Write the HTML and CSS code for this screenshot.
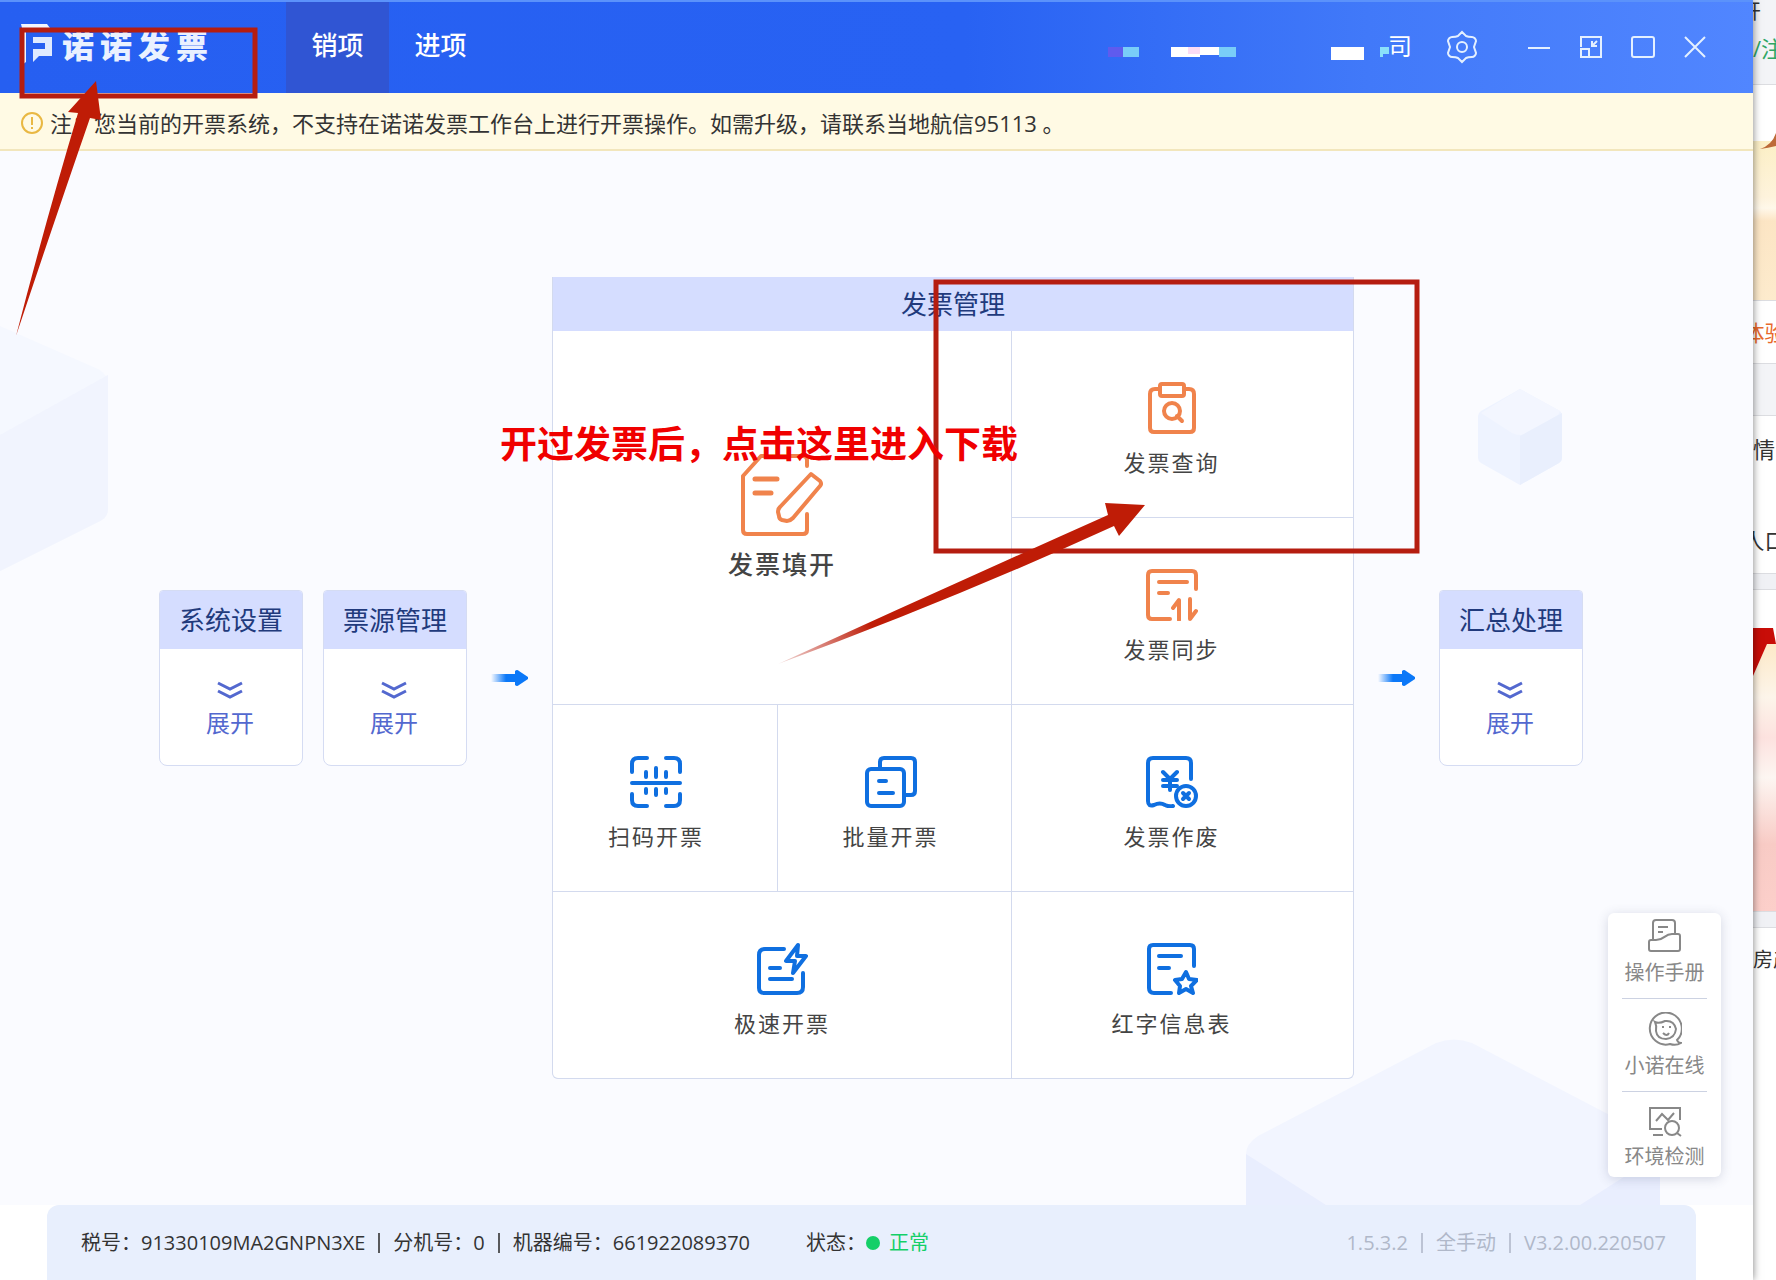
FILE: index.html
```html
<!DOCTYPE html>
<html lang="zh-CN">
<head>
<meta charset="utf-8">
<title>诺诺发票</title>
<link rel="stylesheet" href="styles.css">
</head>
<body>
<div class="app">
  <header class="topbar">
    <div class="brand">
      <svg class="brand-mark" width="34" height="46" viewBox="0 0 34 46" aria-hidden="true"><path d="M1 1h26l3 4H6v34l-4 3V5z" fill="#f2f6ff"/><path d="M13 14h19v19H19l-6 6V26h12v-6H13z" fill="#dfeaff"/></svg>
      <span class="brand-name">诺诺发票</span>
    </div>
    <nav class="tabs">
      <button class="tab tab-active" type="button">销项</button>
      <button class="tab" type="button">进项</button>
    </nav>
    <div class="account">
      <svg width="304" height="16" viewBox="0 0 304 16" aria-hidden="true"><path d="M0 1h15v10H0z" fill="#5f5bee"/><path d="M15 1h16v10H15z" fill="#79cdf8"/><path d="M63 1h48v8H92v2H63z" fill="#fff"/><path d="M80 1h12v7H80z" fill="#fbdcf5"/><path d="M111 1h17v10h-17z" fill="#79cdf8"/><path d="M223 1h33v13h-33z" fill="#fff"/><path d="M272 1h9v7h-6v3h-3z" fill="#8be0fa"/></svg>
      <span class="account-tail">司</span>
    </div>
    <div class="controls">
      <button class="control" type="button" aria-label="设置"><svg width="34" height="34" viewBox="0 0 34 34"><path d="M17 2l4 4c2 1 3 1 6 1 2 0 4 2 4 4l-2 6 2 6c0 2-2 4-4 4-3 0-4 0-6 1l-4 4-4-4c-2-1-3-1-6-1-2 0-4-2-4-4l2-6-2-6c0-2 2-4 4-4 3 0 4 0 6-1z"/><circle cx="17" cy="17" r="5"/></svg></button>
      <button class="control control-min" type="button" aria-label="最小化"><svg width="24" height="24" viewBox="0 0 24 24"><path d="M1 13h22"/></svg></button>
      <button class="control" type="button" aria-label="小窗口"><svg width="24" height="24" viewBox="0 0 24 24"><path d="M2 12V2h20v20H11M2 14h8v8H2zM18 6l-5 5M13 6v5h5"/></svg></button>
      <button class="control" type="button" aria-label="最大化"><svg width="24" height="24" viewBox="0 0 24 24"><rect x="1" y="2" width="22" height="20" rx="2"/></svg></button>
      <button class="control" type="button" aria-label="关闭"><svg width="24" height="24" viewBox="0 0 24 24"><path d="M2 2l20 20M22 2L2 22"/></svg></button>
    </div>
  </header>

  <div class="notice">
    <svg width="24" height="24" viewBox="0 0 24 24" aria-hidden="true"><circle cx="12" cy="12" r="10" fill="none" stroke="#e9b843" stroke-width="2"/><path d="M12 6v8M12 16v2" stroke="#e9b843" stroke-width="2"/></svg>
    <p>注：您当前的开票系统，不支持在诺诺发票工作台上进行开票操作。如需升级，请联系当地航信95113 。</p>
  </div>

  <main class="workspace">
    <svg class="decor decor-left" width="110" height="250" viewBox="0 0 110 250" aria-hidden="true"><path d="M0 3l98 43q10 6 10 14v126q0 8-8 12L0 248z" fill="#f5f8ff"/><path d="M0 112l108-60v134q0 8-8 12L0 248z" fill="#f1f4fe"/></svg>
    <svg class="decor decor-cube" width="86" height="98" viewBox="0 0 86 98" aria-hidden="true"><path d="M43 1l40 22q2 2 2 5v42q0 3-3 5L43 97 4 75q-3-2-3-5V28q0-3 3-5z" fill="#eef3ff"/><path d="M43 1l40 22-2 4-30 18q-8 4-16 0L4 25z" fill="#f3f6ff"/><path d="M43 48l42-23v45q0 3-3 5L43 97z" fill="#e9effd"/></svg>
    <svg class="decor decor-base" width="416" height="166" viewBox="0 0 416 166" aria-hidden="true"><path d="M190 4q18-7 36 0l174 91q14 7 14 20v51H0v-51q0-10 12-18z" fill="#f2f5ff"/><path d="M0 115l80 51H0zM414 115l-80 51h80z" fill="#e9eefe"/></svg>

    <div class="flow">
      <div class="card-group">
        <section class="card"><h2>系统设置</h2><button type="button"><svg width="26" height="18" viewBox="0 0 26 18"><path d="M1 2l12 6 12-6M1 10l12 6 12-6"/></svg>展开</button></section>
        <section class="card"><h2>票源管理</h2><button type="button"><svg width="26" height="18" viewBox="0 0 26 18"><path d="M1 2l12 6 12-6M1 10l12 6 12-6"/></svg>展开</button></section>
      </div>
      <svg class="arrow" width="37" height="18" viewBox="0 0 37 18" aria-hidden="true"><defs><linearGradient id="fade"><stop offset="0" stop-color="#0b78f8" stop-opacity="0"/><stop offset=".6" stop-color="#0b78f8"/></linearGradient></defs><path d="M0 5h25v8H0z" fill="url(#fade)"/><path d="M24 2q2-2 4 0l9 6q1 1 0 2l-9 6q-2 2-4 0z" fill="#0b78f8"/></svg>

      <section class="panel">
        <h2>发票管理</h2>
        <div class="grid">
          <button class="cell cell-main" type="button">
            <svg width="82" height="82" viewBox="0 0 82 82"><path d="M66 12V6q0-4-4-4H20L2 22v54q0 4 4 4h56q4 0 4-4V60"/><path d="M14 25h22M14 39h16" stroke-width="5"/><path d="M70 20l9 7q2 3 0 5L52 64q-3 3-6 3l-5-1q-3-1-3-4l-1-4q0-3 2-5z"/></svg>
            <span>发票填开</span>
          </button>
          <button class="cell cell-right cell-orange" type="button">
            <svg width="52" height="52" viewBox="0 0 52 52"><path d="M14 7h-5q-5 0-5 5v34q0 4 4 4h36q4 0 4-4V12q0-5-5-5h-5"/><rect x="14" y="2" width="24" height="12" rx="2"/><circle cx="26" cy="29" r="8"/><path d="M31 34l5 5"/></svg>
            <span>发票查询</span>
          </button>
          <button class="cell cell-right cell-orange" type="button">
            <svg width="52" height="52" viewBox="0 0 52 52"><path d="M50 20V6q0-4-4-4H6Q2 2 2 6v40q0 4 4 4h18M13 13h28M13 24h9M27 39l6-8v20M44 30v20l6-8"/></svg>
            <span>发票同步</span>
          </button>
          <button class="cell cell-scan" type="button">
            <svg width="52" height="52" viewBox="0 0 52 52"><path d="M2 16V8q0-6 6-6h9M36 2h8q6 0 6 6v8M2 38v6q0 6 6 6h9M36 50h8q6 0 6-6v-6M2 27h48M16 16v5M26 12v9M36 16v5M16 33v4M26 33v6M36 33v4"/></svg>
            <span>扫码开票</span>
          </button>
          <button class="cell cell-batch" type="button">
            <svg width="52" height="52" viewBox="0 0 52 52"><path d="M15 13V6q0-4 4-4h27q4 0 4 4v29q0 4-4 4h-6"/><rect x="2" y="13" width="37" height="37" rx="4"/><path d="M14 25h7M14 37h14"/></svg>
            <span>批量开票</span>
          </button>
          <button class="cell cell-right" type="button">
            <svg width="52" height="52" viewBox="0 0 52 52"><path d="M45 23V7q0-5-5-5H7Q2 2 2 7v38q0 6 6 4 6-3 11 0 4 2 8 1M17 16l7 7 7-7M24 23v11M17 24h14M17 30h14"/><circle cx="40" cy="40" r="10"/><path d="M37 37l6 6M43 37l-6 6"/></svg>
            <span>发票作废</span>
          </button>
          <button class="cell cell-fast" type="button">
            <svg width="52" height="52" viewBox="0 0 52 52"><path d="M28 6H9Q3 6 3 12v33q0 5 5 5h33q6 0 6-6V30M14 25h10M14 36h22M42 2L30 18h9l-2 12 13-17h-9z"/></svg>
            <span>极速开票</span>
          </button>
          <button class="cell cell-right" type="button">
            <svg width="52" height="52" viewBox="0 0 52 52"><path d="M48 23V6q0-4-4-4H7Q3 2 3 6v39q0 5 5 5h17M13 13h22M13 25h10M40 29l3 7 8 1-6 6 2 7-7-4-7 4 1-7-5-6 7-1z"/></svg>
            <span>红字信息表</span>
          </button>
        </div>
      </section>

      <svg class="arrow" width="37" height="18" viewBox="0 0 37 18" aria-hidden="true"><path d="M0 5h25v8H0z" fill="url(#fade)"/><path d="M24 2q2-2 4 0l9 6q1 1 0 2l-9 6q-2 2-4 0z" fill="#0b78f8"/></svg>
      <section class="card"><h2>汇总处理</h2><button type="button"><svg width="26" height="18" viewBox="0 0 26 18"><path d="M1 2l12 6 12-6M1 10l12 6 12-6"/></svg>展开</button></section>
    </div>
  </main>

  <footer class="footer">
    <div class="status">
      <div class="status-left">
        <span>税号：91330109MA2GNPN3XE</span><i></i><span>分机号：0</span><i></i><span>机器编号：661922089370</span>
        <span class="state">状态：<b></b><em>正常</em></span>
      </div>
      <div class="status-right"><span>1.5.3.2</span><i></i><span>全手动</span><i></i><span>V3.2.00.220507</span></div>
    </div>
  </footer>

  <aside class="tools">
    <button type="button"><svg width="34" height="34" viewBox="0 0 34 34"><path d="M5 20V4q0-3 3-3h16q3 0 3 3v11M10 8h10M10 13h5M3 21h5c9 0 8-6 16-6h6q2 0 2 2v13q0 2-2 2H3q-2 0-2-2v-7q0-2 2-2z"/></svg><span>操作手册</span></button>
    <button type="button"><svg width="34" height="34" viewBox="0 0 34 34"><path d="M29 28a16 16 0 1 0-7 4q6 2 11-1-3 0-4-3z"/><path d="M7 10q4 2 10-1 9-1 11 8-1 9-10 10Q9 27 8 19 9 14 7 10z"/><path d="M15 14v2M22 14v2M15 21q4 4 6 0"/></svg><span>小诺在线</span></button>
    <button type="button"><svg width="34" height="34" viewBox="0 0 34 34"><path d="M14 24H2V3h30v12M5 30h10M8 16l6-7 6 6 6-7M29 28l4 3"/><circle cx="24" cy="23" r="7"/></svg><span>环境检测</span></button>
  </aside>

  <div class="marks">
    <svg width="1440" height="680" viewBox="0 0 1440 680" aria-hidden="true">
      <defs><linearGradient id="tail" gradientUnits="userSpaceOnUse" x1="778" y1="664" x2="870" y2="622"><stop offset="0" stop-color="#b51d10" stop-opacity=".15"/><stop offset="1" stop-color="#bf1c06"/></linearGradient></defs>
      <g fill="none" stroke="#b51d10" stroke-width="5"><rect x="22" y="30" width="233" height="66"/><rect x="936" y="282" width="481" height="269"/></g>
      <path d="M96 81L68 112l10 1Q46 220 16 336q38-114 74-218l11 2z" fill="#bf1c06"/>
      <path d="M1145 505l-40-2 3 12Q940 590 778 664q174-64 336-138l5 10z" fill="url(#tail)"/>
    </svg>
    <p>开过发票后，点击这里进入下载</p>
  </div>
</div>

<div class="behind">
  <div class="strip strip-head"><span class="strip-cut">开</span><span class="strip-green">/注</span></div>
  <div class="strip strip-banner"><svg width="23" height="216" viewBox="0 0 23 216" aria-hidden="true"><defs><linearGradient id="cream" x2="0" y2="1"><stop offset="0" stop-color="#fcefc5"/><stop offset=".35" stop-color="#fef3dc"/><stop offset=".42" stop-color="#fff8ea"/><stop offset=".5" stop-color="#fce5c4"/><stop offset="1" stop-color="#fdebcd"/></linearGradient></defs><path d="M0 56h23v160H0z" fill="url(#cream)"/><path d="M7 64q12-4 16-16v13q-8 2-16 3z" fill="#bd6a38"/></svg></div>
  <div class="strip strip-trial">体验</div>
  <div class="strip strip-gap"></div>
  <div class="strip strip-links"><span>情</span><span class="strip-wide">人口</span></div>
  <div class="strip strip-line"></div>
  <div class="strip strip-art"><svg width="23" height="321" viewBox="0 0 23 321" aria-hidden="true"><defs><linearGradient id="peach" x2="0" y2="1"><stop offset="0" stop-color="#fde9c8"/><stop offset=".2" stop-color="#fdf5ea"/><stop offset=".35" stop-color="#fde2df"/><stop offset=".5" stop-color="#fdf6f2"/><stop offset=".75" stop-color="#f8cbc5"/><stop offset="1" stop-color="#fccfca"/></linearGradient></defs><path d="M0 86L14 54h9v267H0z" fill="url(#peach)"/><path d="M0 38h20l3 16h-9L0 86z" fill="#c80d08"/></svg></div>
  <div class="strip strip-line"></div>
  <div class="strip strip-rest">房产</div>
</div>
</body>
</html>
```
FILE: styles.css
```css
* { box-sizing: border-box; }

body {
  margin: 0;
  min-height: 100vh;
  display: flex;
  overflow-x: hidden;
  background: #fff;
  color: #333;
  font: 22px/24px "Open Sans", "Noto Sans CJK SC", sans-serif;
}

h2, p { margin: 0; font-weight: 400; }

button {
  margin: 0;
  padding: 0;
  border: 0;
  background: none;
  color: inherit;
  font: inherit;
  cursor: pointer;
}

svg { display: block; flex: none; }

.app {
  position: relative;
  z-index: 1;
  flex: 1;
  min-width: 0;
  display: flex;
  flex-direction: column;
  background: #fafbff;
  box-shadow: 0 0 8px rgba(0, 0, 0, .5);
}

/* top bar */
.topbar {
  display: flex;
  align-items: stretch;
  height: 93px;
  border-top: 2px solid #5b92fb;
  background: linear-gradient(90deg, #265ff1 0%, #2862f3 55%, #4179f9 78%, #5186ff 100%);
  color: #fff;
}

.brand {
  display: flex;
  align-items: center;
  gap: 8px;
  width: 286px;
  padding-left: 20px;
  padding-bottom: 4px;
}

.brand-name {
  color: #eaf1ff;
  font-size: 32px;
  font-weight: 900;
  line-height: 40px;
  letter-spacing: 6px;
}

.tabs { display: flex; }

.tab {
  width: 103px;
  padding-bottom: 6px;
  font-size: 26px;
  font-weight: 500;
}

.tab-active { background: #3055d3; }

.account {
  display: flex;
  align-items: center;
  margin-left: auto;
  padding-bottom: 4px;
}

.account svg { margin-top: 16px; margin-right: -24px; }
.account-tail { font-size: 24px; }

.controls {
  display: flex;
  align-items: center;
  gap: 28px;
  padding: 0 46px 2px 33px;
}

.control-min { margin-left: 20px; }
.control svg { fill: none; stroke: #e4f0ff; stroke-width: 2; }

/* notice */
.notice {
  display: flex;
  align-items: center;
  gap: 6px;
  height: 58px;
  padding: 4px 20px 0;
  border-bottom: 2px solid #f2e6bc;
  background: #fffae4;
  white-space: nowrap;
}

/* workspace */
.workspace {
  position: relative;
  flex: 1;
  display: flex;
  align-items: center;
  padding: 50px 170px 50px 159px;
}

.decor { position: absolute; }
.decor-left { left: 0; top: 172px; }
.decor-cube { right: 190px; top: 237px; }
.decor-base { right: 91px; bottom: 0; }

.flow {
  position: relative;
  flex: 1;
  display: flex;
  align-items: center;
  gap: 24px;
}

.card-group { display: flex; gap: 20px; }

.card {
  width: 144px;
  flex: none;
  overflow: hidden;
  border: 1px solid #d5dcf3;
  border-radius: 4px 4px 8px 8px;
  background: #fff;
}

.card h2 {
  background: #d5ddff;
  color: #213a7c;
  font-size: 26px;
  line-height: 58px;
  text-align: center;
}

.card button {
  display: flex;
  flex-direction: column;
  align-items: center;
  gap: 12px;
  width: 100%;
  height: 116px;
  padding-top: 32px;
  padding-right: 2px;
  color: #5368cf;
  font-size: 24px;
}

.card svg { fill: none; stroke: #5368cf; stroke-width: 3; }

.panel {
  flex: 1;
  overflow: hidden;
  border: 1px solid #d3daee;
  border-top: 0;
  border-radius: 0 0 6px 6px;
  background: #d3daee;
}

.panel h2 {
  background: #d5ddff;
  color: #213a7c;
  font-size: 26px;
  line-height: 54px;
  text-align: center;
}

.grid {
  display: grid;
  grid-template-columns: 224fr 233fr 341fr;
  grid-template-rows: repeat(4, 186px);
  gap: 1px;
}

.cell {
  display: flex;
  flex-direction: column;
  align-items: center;
  justify-content: center;
  gap: 16px;
  padding-top: 8px;
  background: #fff;
  color: #444;
  letter-spacing: 2px;
}

.cell svg {
  fill: none;
  stroke: #0f6fe0;
  stroke-width: 4;
  stroke-linecap: round;
  stroke-linejoin: round;
}

.cell-main {
  grid-area: 1 / 1 / 3 / 3;
  padding: 0 0 6px;
  font-size: 25px;
  font-weight: 500;
}

.cell-main svg, .cell-orange svg { stroke: #f0834c; }
.cell-right { grid-column: 3; padding-right: 22px; }
.cell-scan { grid-column: 1; padding-right: 18px; }
.cell-batch { grid-column: 2; padding-right: 8px; }
.cell-fast { grid-column: 1 / 3; }

/* footer */
.footer { padding: 0 57px 0 47px; background: #fff; }

.status {
  display: flex;
  align-items: center;
  justify-content: space-between;
  height: 75px;
  padding: 0 30px 0 34px;
  border-radius: 12px 12px 0 0;
  background: #e8effd;
  font-size: 20px;
  white-space: nowrap;
}

.status-left, .status-right, .state { display: flex; align-items: center; }
.status i { width: 2px; height: 20px; margin: 0 13px; background: currentColor; opacity: .8; }
.status-right { color: #b0b8c9; }
.state { margin-left: 56px; }
.state b { width: 14px; height: 14px; margin-right: 9px; border-radius: 50%; background: #14cf68; }
.state em { color: #14cf68; font-style: normal; }

/* floating tools */
.tools {
  position: absolute;
  right: 32px;
  bottom: 103px;
  width: 113px;
  padding: 0 14px;
  border-radius: 6px;
  background: #fff;
  box-shadow: 0 2px 12px rgba(60, 70, 110, .2);
  color: #888;
  font-size: 20px;
}

.tools button {
  display: flex;
  flex-direction: column;
  align-items: center;
  gap: 8px;
  width: 100%;
  padding: 13px 0;
  border-bottom: 1px solid #ccd2e2;
  white-space: nowrap;
}

.tools button:first-child { padding-top: 6px; }
.tools button:last-child { gap: 6px; padding-bottom: 8px; border-bottom: 0; }
.tools svg { fill: none; stroke: #888; stroke-width: 2; }

/* marks over the window */
.marks { position: absolute; left: 0; top: 0; pointer-events: none; }

.marks p {
  position: absolute;
  left: 500px;
  top: 421px;
  color: #f00000;
  font-size: 37px;
  font-weight: 700;
  line-height: 46px;
  white-space: nowrap;
}

/* page behind the window */
.behind {
  display: flex;
  flex-direction: column;
  flex: none;
  width: 23px;
  overflow: hidden;
  white-space: nowrap;
}

.strip { display: flex; overflow: hidden; flex: none; }
.strip-head { flex-direction: column; gap: 12px; height: 85px; background: #f3f4f7; border-bottom: 1px solid #dcdde1; }
.strip-cut { align-self: flex-end; padding-right: 15px; font-size: 20px; }
.strip-green { color: #2fa765; }
.strip-banner { height: 216px; border-bottom: 1px solid #dcdde1; }
.strip-trial { height: 62px; align-items: center; justify-content: center; color: #e8692c; }
.strip-gap { height: 53px; background: #f3f4f7; border: solid #dcdde1; border-width: 1px 0; }
.strip-links { flex-direction: column; gap: 67px; height: 157px; padding-top: 21px; }
.strip-wide { align-self: center; }
.strip-line { height: 17px; background: #f0f1f5; border: solid #dcdde1; border-width: 1px 0; }
.strip-art { height: 321px; }
.strip-rest { flex: 1; padding-top: 20px; font-size: 20px; }
```
